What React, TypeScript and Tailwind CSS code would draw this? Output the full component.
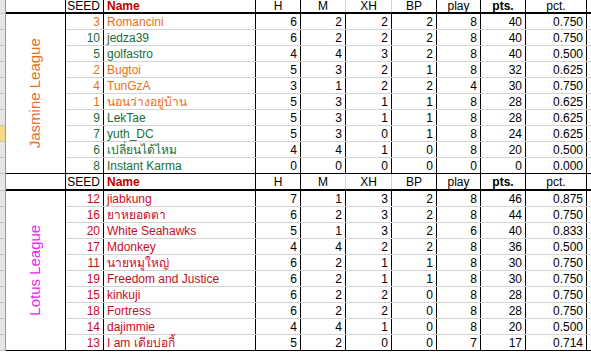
import React from 'react';

type Row = {
  seed: number;
  name: string;
  h: number;
  m: number;
  xh: number;
  bp: number;
  play: number;
  pts: number;
  pct: string;
  color: string;
};

const ORANGE = 'text-[#e8701e]';
const GREEN = 'text-[#1d6b36]';
const RED = 'text-[#cc0a1e]';

const jasmine: Row[] = [
  { seed: 3, name: 'Romancini', h: 6, m: 2, xh: 2, bp: 2, play: 8, pts: 40, pct: '0.750', color: ORANGE },
  { seed: 10, name: 'jedza39', h: 6, m: 2, xh: 2, bp: 2, play: 8, pts: 40, pct: '0.750', color: GREEN },
  { seed: 5, name: 'golfastro', h: 4, m: 4, xh: 3, bp: 2, play: 8, pts: 40, pct: '0.500', color: GREEN },
  { seed: 2, name: 'Bugtoi', h: 5, m: 3, xh: 2, bp: 1, play: 8, pts: 32, pct: '0.625', color: ORANGE },
  { seed: 4, name: 'TunGzA', h: 3, m: 1, xh: 2, bp: 2, play: 4, pts: 30, pct: '0.750', color: ORANGE },
  { seed: 1, name: 'นอนว่างอยู่บ้าน', h: 5, m: 3, xh: 1, bp: 1, play: 8, pts: 28, pct: '0.625', color: ORANGE },
  { seed: 9, name: 'LekTae', h: 5, m: 3, xh: 1, bp: 1, play: 8, pts: 28, pct: '0.625', color: GREEN },
  { seed: 7, name: 'yuth_DC', h: 5, m: 3, xh: 0, bp: 1, play: 8, pts: 24, pct: '0.625', color: GREEN },
  { seed: 6, name: 'เปลี่ยนได้ไหม', h: 4, m: 4, xh: 1, bp: 0, play: 8, pts: 20, pct: '0.500', color: GREEN },
  { seed: 8, name: 'Instant Karma', h: 0, m: 0, xh: 0, bp: 0, play: 0, pts: 0, pct: '0.000', color: GREEN },
];

const lotus: Row[] = [
  { seed: 12, name: 'jiabkung', h: 7, m: 1, xh: 3, bp: 2, play: 8, pts: 46, pct: '0.875', color: RED },
  { seed: 16, name: 'ยาหยอดตา', h: 6, m: 2, xh: 3, bp: 2, play: 8, pts: 44, pct: '0.750', color: RED },
  { seed: 20, name: 'White Seahawks', h: 5, m: 1, xh: 3, bp: 2, play: 6, pts: 40, pct: '0.833', color: RED },
  { seed: 17, name: 'Mdonkey', h: 4, m: 4, xh: 2, bp: 2, play: 8, pts: 36, pct: '0.500', color: RED },
  { seed: 11, name: 'นายหมูใหญ่', h: 6, m: 2, xh: 1, bp: 1, play: 8, pts: 30, pct: '0.750', color: RED },
  { seed: 19, name: 'Freedom and Justice', h: 6, m: 2, xh: 1, bp: 1, play: 8, pts: 30, pct: '0.750', color: RED },
  { seed: 15, name: 'kinkuji', h: 6, m: 2, xh: 2, bp: 0, play: 8, pts: 28, pct: '0.750', color: RED },
  { seed: 18, name: 'Fortress', h: 6, m: 2, xh: 2, bp: 0, play: 8, pts: 28, pct: '0.750', color: RED },
  { seed: 14, name: 'dajimmie', h: 4, m: 4, xh: 1, bp: 0, play: 8, pts: 20, pct: '0.500', color: RED },
  { seed: 13, name: 'I am เดียบ่อกี้', h: 5, m: 2, xh: 0, bp: 0, play: 7, pts: 17, pct: '0.714', color: RED },
];

const HeaderRow = ({ height }: { height: string }) => (
  <div className={`flex ${height} border-b-2 border-black leading-none`}>
    <div className="w-[38px] border-r border-black text-right pr-[3px] flex items-center justify-end">SEED</div>
    <div className="w-[152px] border-r border-black pl-[3px] flex items-center font-bold text-[#c00000]">Name</div>
    <div className="w-[45px] border-r border-black flex items-center justify-center">H</div>
    <div className="w-[45px] border-r border-[#d4d4d4] flex items-center justify-center">M</div>
    <div className="w-[46px] border-r border-[#d4d4d4] flex items-center justify-center">XH</div>
    <div className="w-[45px] border-r border-black flex items-center justify-center">BP</div>
    <div className="w-[44px] border-r border-black flex items-center justify-center">play</div>
    <div className="w-[45px] border-r border-black flex items-center justify-center font-bold">pts.</div>
    <div className="w-[61px] border-r border-black flex items-center justify-center">pct.</div>
    <div className="flex-1" />
  </div>
);

const DataRow = ({ row, last }: { row: Row; last: boolean }) => (
  <div className={`flex h-4 border-b leading-none ${last ? 'border-black' : 'border-[#d4d4d4]'}`}>
    <div className={`w-[38px] border-r border-black flex items-center justify-end pr-[3px] ${row.color}`}>{row.seed}</div>
    <div className={`w-[152px] border-r border-black flex items-center pl-[3px] whitespace-nowrap ${row.color}`}>{row.name}</div>
    <div className="w-[45px] border-r border-black flex items-center justify-end pr-[3px]">{row.h}</div>
    <div className="w-[45px] border-r border-black flex items-center justify-end pr-[3px]">{row.m}</div>
    <div className="w-[46px] border-r border-black flex items-center justify-end pr-[3px]">{row.xh}</div>
    <div className="w-[45px] border-r border-black flex items-center justify-end pr-[3px]">{row.bp}</div>
    <div className="w-[44px] border-r border-black flex items-center justify-end pr-[3px]">{row.play}</div>
    <div className="w-[45px] border-r border-black flex items-center justify-end pr-[3px]">{row.pts}</div>
    <div className="w-[61px] border-r border-black flex items-center justify-end pr-[3px]">{row.pct}</div>
    <div className="flex-1" />
  </div>
);

const Section = ({
  title,
  titleColor,
  rows,
  headerHeight,
  selectedRow,
}: {
  title: string;
  titleColor: string;
  rows: Row[];
  headerHeight: string;
  selectedRow?: number;
}) => (
  <div className="flex">
    {/* row headers */}
    <div className="w-[6px] flex flex-col border-r border-[#9a9a9a] bg-[#e6e6e6]">
      <div className={`${headerHeight} border-b border-[#c4c4c4]`} />
      {rows.map((_, i) => (
        <div
          key={i}
          className={`h-4 border-b border-[#c4c4c4] ${i === selectedRow ? 'bg-[#f6d889]' : ''}`}
        />
      ))}
    </div>
    {/* league label */}
    <div className="w-[60px] flex flex-col border-r border-black">
      <div className={`${headerHeight} border-b-2 border-black`} />
      <div className="flex-1 border-b border-black flex items-center justify-center">
        <span className={`-rotate-90 whitespace-nowrap text-[15px] ${titleColor}`}>{title}</span>
      </div>
    </div>
    <div className="flex-1 flex flex-col">
      <HeaderRow height={headerHeight} />
      {rows.map((r, i) => (
        <DataRow key={r.seed} row={r} last={i === rows.length - 1} />
      ))}
    </div>
  </div>
);

export default function App() {
  return (
    <div
      className="w-[591px] h-[353px] overflow-hidden bg-white text-black text-[12px]"
      style={{ fontFamily: '"Liberation Sans", "Noto Sans", sans-serif' }}
    >
      <Section title="Jasmine League" titleColor="text-[#e8701e]" rows={jasmine} headerHeight="h-[14px]" selectedRow={7} />
      <Section title="Lotus League" titleColor="text-[#ee22ee]" rows={lotus} headerHeight="h-[17px]" />
    </div>
  );
}
